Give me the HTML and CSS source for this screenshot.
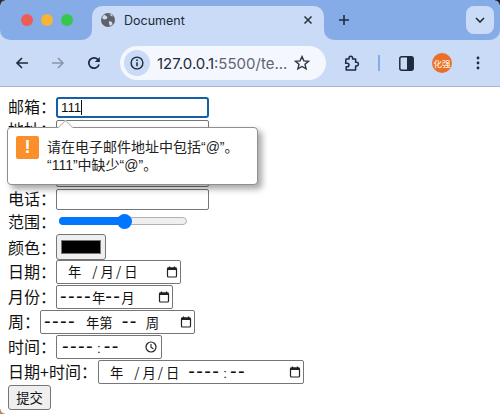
FILE: index.html
```html
<!DOCTYPE html>
<html lang="zh">
<head>
<meta charset="utf-8">
<title>Document</title>
<link rel="stylesheet" href="styles.css">
</head>
<body>
<header class="browser">
  <div class="tabstrip">
    <div class="seg-left"><i class="light red"></i><i class="light amber"></i><i class="light green"></i></div>
    <div class="tab">
      <svg class="globe" width="14" height="14" viewBox="0 0 14 14"><circle cx="7" cy="7" r="7" fill="#5f6368"/><path d="M3 1.5 6.5 4 5.5 6 3 6.500 1 5ZM8 8l3 1 .5 2.500L9 13l-1-2.500ZM8.500.8 10 3 12 3.500 11 1.800Z" fill="#c9dbf6"/></svg>
      <span class="tabtitle">Document</span>
      <svg class="tabclose" width="10" height="10" viewBox="0 0 10 10"><path d="M1.500 1.500l7 7M8.500 1.500l-7 7" stroke="#2b3442" stroke-width="1.600"/></svg>
    </div>
    <div class="seg-right">
      <svg class="newtab" width="12" height="12" viewBox="0 0 12 12"><path d="M6 1v10M1 6h10" stroke="#1f2a3a" stroke-width="1.600"/></svg>
      <div class="tabsearch"><svg width="10" height="6" viewBox="0 0 10 6"><path d="M1 1l4 4 4-4" fill="none" stroke="#1f2a3a" stroke-width="1.600"/></svg></div>
    </div>
  </div>
  <div class="toolbar">
    <svg class="navicon" width="14" height="14" viewBox="0 0 14 14"><path d="M13 7H2M7 2 2 7l5 5" fill="none" stroke="#1f2a3a" stroke-width="1.600"/></svg>
    <svg class="navicon forward" width="14" height="14" viewBox="0 0 14 14"><path d="M1 7h11M7 2l5 5-5 5" fill="none" stroke="#8a96a8" stroke-width="1.600"/></svg>
    <svg class="navicon reload" width="14" height="14" viewBox="0 0 14 14"><path d="M12 8.500A5.200 5.200 0 1 1 10.800 3.400L12 5" fill="none" stroke="#1f2a3a" stroke-width="1.700"/><path d="M12.800 1v5h-5Z" fill="#1f2a3a"/></svg>
    <div class="omnibox">
      <div class="siteinfo"><svg width="14" height="14" viewBox="0 0 14 14"><circle cx="7" cy="7" r="5.900" fill="none" stroke="#1f2a3a" stroke-width="1.400"/><path d="M7 6.200v4" stroke="#1f2a3a" stroke-width="1.500"/><circle cx="7" cy="4.200" r=".9" fill="#1f2a3a"/></svg></div>
      <span class="url"><b>127.0.0.1</b>:5500/te...</span>
      <svg class="star" width="16" height="16" viewBox="0 0 16 16"><path d="M8 1.600l1.900 4.300 4.600.4-3.500 3 1.100 4.600L8 11.500l-4.100 2.400L5 9.300l-3.500-3 4.600-.4Z" fill="none" stroke="#2b3442" stroke-width="1.400"/></svg>
    </div>
    <svg class="puzzle" width="17" height="17" viewBox="0 0 17 17"><path d="M3 4h3V3a1.800 1.800 0 0 1 3.600 0v1h3v3.300h1a1.800 1.800 0 0 1 0 3.600h-1V15H3.200v-3.200h1a1.800 1.800 0 0 0 0-3.600h-1.600Z" fill="none" stroke="#1f2a3a" stroke-width="1.500" stroke-linejoin="round"/></svg>
    <i class="divider"></i>
    <svg class="sidepanel" width="15" height="15" viewBox="0 0 15 15"><rect x=".8" y=".8" width="13.400" height="13.400" rx="2" fill="none" stroke="#1f2a3a" stroke-width="1.500"/><path d="M8 1h5a1 1 0 0 1 1 1v11a1 1 0 0 1-1 1H8Z" fill="#1f2a3a"/></svg>
    <div class="avatar">化强</div>
    <svg class="menu" width="4" height="14" viewBox="0 0 4 14"><circle cx="2" cy="2" r="1.400" fill="#1f2a3a"/><circle cx="2" cy="7" r="1.400" fill="#1f2a3a"/><circle cx="2" cy="12" r="1.400" fill="#1f2a3a"/></svg>
  </div>
</header>

<main class="page">
  <form class="form">
    <div class="row row-text"><label class="label">邮箱：</label><div class="field field-focus">111<i class="caret"></i></div></div>
    <div class="row row-text"><label class="label">地址：</label><div class="field"></div></div>
    <div class="row row-text"><span class="label-blank"></span><div class="field"></div></div>
    <div class="row row-text"><span class="label-blank"></span><div class="field"></div></div>
    <div class="row row-text"><label class="label">电话：</label><div class="field"></div></div>
    <div class="row row-range"><label class="label">范围：</label><div class="slider"><i class="slider-fill"></i><i class="slider-thumb"></i></div></div>
    <div class="row row-color"><label class="label">颜色：</label><div class="colorbtn"><i class="swatch"></i></div></div>
    <div class="row row-date"><label class="label">日期：</label><div class="picker w-date"><span class="picker-text pad-date">年<span class="sep sep-first">/</span>月<span class="sep">/</span>日</span><svg class="cal" viewBox="0 0 12 12"><use href="#calendar"/></svg></div></div>
    <div class="row row-date"><label class="label">月份：</label><div class="picker w-month"><span class="picker-text"><span class="dash">----</span>年<span class="dash">--</span>月</span><svg class="cal" viewBox="0 0 12 12"><use href="#calendar"/></svg></div></div>
    <div class="row row-date"><label class="label">周：</label><div class="picker w-week"><span class="picker-text"><span class="dash">----</span><span class="w-year">年第</span><span class="dash w-num">--</span><span class="w-unit">周</span></span><svg class="cal" viewBox="0 0 12 12"><use href="#calendar"/></svg></div></div>
    <div class="row row-date"><label class="label">时间：</label><div class="picker w-time"><span class="picker-text pad-time"><span class="dash">----</span><span class="colon">:</span><span class="dash">--</span></span><svg class="cal clock" viewBox="0 0 12 12"><circle cx="6" cy="6" r="5" fill="none" stroke="#222" stroke-width="1.200"/><path d="M6 3v3.200l2.400 1.600" fill="none" stroke="#222" stroke-width="1.100"/></svg></div></div>
    <div class="row row-date"><label class="label label-wide">日期+时间：</label><div class="picker w-datetime"><span class="picker-text pad-date">年<span class="sep sep-first">/</span>月<span class="sep">/</span>日<span class="dash dt-dash">----</span><span class="colon">:</span><span class="dash">--</span></span><svg class="cal" viewBox="0 0 12 12"><use href="#calendar"/></svg></div></div>
    <button class="submit" type="button">提交</button>
  </form>

  <div class="bubble">
    <i class="bubble-arrow"></i>
    <div class="bubble-icon">!</div>
    <div class="bubble-text">请在电子邮件地址中包括“@”。<br>“111”中缺少“@”。</div>
  </div>
</main>

<i class="corner corner-tl"></i><i class="corner corner-tr"></i><i class="corner corner-bl"></i>

<svg class="defs" width="0" height="0"><defs><g id="calendar"><rect x="1.500" y="2" width="9" height="9" rx="1" fill="none" stroke="#222" stroke-width="1.200"/><rect x="1.500" y="1.500" width="9" height="2.500" fill="#222"/><path d="M3.500 .5v2M8.500 .5v2" stroke="#222" stroke-width="1.200"/></g></defs></svg>
</body>
</html>
```

FILE: styles.css
```css
* { box-sizing: border-box; }
html, body { margin: 0; padding: 0; background: #fff; }
body { width: 500px; height: 414px; overflow: hidden; position: relative; font-family: "Liberation Sans", "Noto Sans CJK SC", sans-serif; color: #111; }
i { display: block; }

.browser { height: 87px; background: #c9dbf6; border-bottom: 1px solid #aab4c4; display: flex; flex-direction: column; }
.tabstrip { height: 40px; background: linear-gradient(#85ace6 0 20px, #c9dbf6 20px); display: flex; align-items: flex-end; }
.seg-left { width: 92px; height: 40px; background: #85ace6; border-radius: 0 0 10px 10px; display: flex; gap: 8px; padding: 14px 0 0 21px; }
.light { width: 12px; height: 12px; border-radius: 50%; }
.red { background: #ee5c58; }
.amber { background: #f6b536; }
.green { background: #36c84c; }
.tab { width: 232px; height: 34px; background: #c9dbf6; border-radius: 10px 10px 0 0; display: flex; align-items: center; padding: 0 11px 6px 9px; }
.globe { flex: none; }
.tabtitle { margin-left: 9px; font: 12.5px "Inter", "Liberation Sans", sans-serif; color: #1f2a3a; flex: 1; }
.seg-right { flex: 1; height: 40px; background: #85ace6; border-radius: 0 0 10px 10px; display: flex; justify-content: space-between; padding: 6px 6px 0 14px; }
.newtab { margin-top: 8px; }
.tabsearch { width: 28px; height: 28px; background: #c9dbf6; border-radius: 8px; display: flex; align-items: center; justify-content: center; }

.toolbar { flex: 1; display: flex; align-items: center; padding: 0 15px; }
.navicon.forward { margin-left: 22px; }
.navicon.reload { margin-left: 22px; }
.omnibox { width: 206px; height: 34px; margin-left: 19px; background: #f4f8fe; border-radius: 17px; display: flex; align-items: center; padding: 0 16px 0 4px; }
.siteinfo { width: 26px; height: 26px; border-radius: 50%; background: #c9dbf6; display: flex; align-items: center; justify-content: center; flex: none; }
.url { margin-left: 7px; flex: 1; font: 15px "Inter", "Liberation Sans", sans-serif; color: #5f6673; white-space: nowrap; }
.url b { font-weight: 400; color: #1f2a3a; }
.star { flex: none; margin-left: -12px; }
.puzzle { margin-left: 17px; }
.divider { width: 2px; height: 16px; background: #85ace6; margin-left: 18px; }
.sidepanel { margin-left: 19px; }
.avatar { width: 20px; height: 20px; margin-left: 18px; border-radius: 50%; background: #ea6f27; color: #fde7d6; font-size: 8.500px; font-weight: 500; line-height: 20px; text-align: center; white-space: nowrap; font-family: "Noto Sans CJK SC", sans-serif; }
.menu { margin-left: 24px; }

.page { position: relative; height: 327px; padding: 10px 0 0 8px; }
.form { display: flex; flex-direction: column; align-items: flex-start; font-family: "Noto Sans CJK SC", sans-serif; font-size: 16px; }
.row { display: flex; align-items: center; }
.label { white-space: nowrap; line-height: 18px; }
.label-blank { width: 48px; }
.label-wide { margin-right: 1px; }
.row-text { height: 23px; align-items: flex-start; }
.field { width: 153px; height: 21px; border: 1px solid #767676; border-radius: 2px; font: 13.33px "Liberation Sans", sans-serif; line-height: 19px; padding-left: 3px; display: flex; align-items: center; }
.field-focus { border: 2px solid #145fa8; border-radius: 3px; padding-left: 3px; }
.caret { width: 1px; height: 15px; background: #111; }
.row-range { height: 17px; }
.slider { position: relative; width: 128px; height: 8px; margin-left: 3px; background: #efefef; border: 1px solid #b2b2b2; border-radius: 4px; }
.slider-fill { width: 65px; height: 8px; margin: -1px 0 0 -1px; background: #0075ff; border-radius: 4px 0 0 4px; }
.slider-thumb { position: absolute; left: 57px; top: -4px; width: 15px; height: 15px; border-radius: 50%; background: #0075ff; }
.row-color { height: 31px; padding-top: 4px; }
.colorbtn { width: 50px; height: 26px; background: #efefef; border: 1px solid #767676; border-radius: 3px; padding: 5px 4px; }
.swatch { width: 40px; height: 14px; background: #000; border: 1px solid #777; }
.row-date { height: 25px; align-items: flex-start; }
.row-date .label { line-height: 22px; }
.picker { height: 24px; border: 1px solid #767676; border-radius: 2px; display: flex; align-items: center; justify-content: space-between; padding: 0 2px 0 3px; font-size: 13.33px; color: #111; white-space: nowrap; }
.picker-text { line-height: 20px; }
.pad-date { padding-left: 8px; }
.pad-time { padding-left: 2px; }
.sep { margin: 0 3px 0 2px; }
.sep-first { margin-left: 11px; }
.dash { font: 20px/20px "Liberation Sans", sans-serif; letter-spacing: 1.33px; }
.dt-dash { margin-left: 9px; }
.colon { margin: 0 3px; font-family: "Liberation Sans", sans-serif; }
.w-year { margin-left: 10px; }
.w-num { margin-left: 9px; }
.w-unit { margin-left: 8px; }
.w-date { width: 125px; }
.w-month { width: 117px; }
.w-week { width: 155px; }
.w-time { width: 106px; }
.w-datetime { width: 206px; }
.cal { width: 12px; height: 12px; flex: none; }
.clock { margin-right: 2px; }
.submit { width: 43px; height: 25px; padding: 0; background: #efefef; border: 1px solid #767676; border-radius: 3px; font: 13.33px "Noto Sans CJK SC", sans-serif; color: #111; }

.bubble { position: absolute; left: 7px; top: 40px; width: 251px; height: 58px; background: #fff; border: 1px solid #8f8f8f; border-radius: 4px; box-shadow: 4px 4px 6px rgba(0,0,0,.35); display: flex; padding: 8px 8px 0 8px; font-family: "Liberation Sans", "Noto Sans CJK SC", sans-serif; }
.bubble-arrow { position: absolute; left: 52px; top: -6px; width: 11px; height: 11px; background: #fff; border: 1px solid #bbb; border-right: 0; border-bottom: 0; transform: rotate(45deg); }
.bubble-icon { width: 23px; height: 23px; flex: none; background: #fb8f2c; color: #fff; border-radius: 2px; text-align: center; font: 700 18px/23px "Liberation Sans", sans-serif; }
.bubble-text { margin-left: 8px; font-size: 14px; line-height: 18px; padding-top: 2px; color: #222; white-space: nowrap; }

.corner { position: absolute; width: 5px; height: 5px; }
.corner-tl { left: 0; top: 0; background: radial-gradient(circle at 100% 100%, transparent 4px, #3a2a22 5px); }
.corner-tr { right: 0; top: 0; background: radial-gradient(circle at 0 100%, transparent 4px, #222 5px); }
.corner-bl { left: 0; bottom: 0; background: radial-gradient(circle at 100% 0, transparent 4px, #b98a5a 5px); }
.defs { position: absolute; }
```
